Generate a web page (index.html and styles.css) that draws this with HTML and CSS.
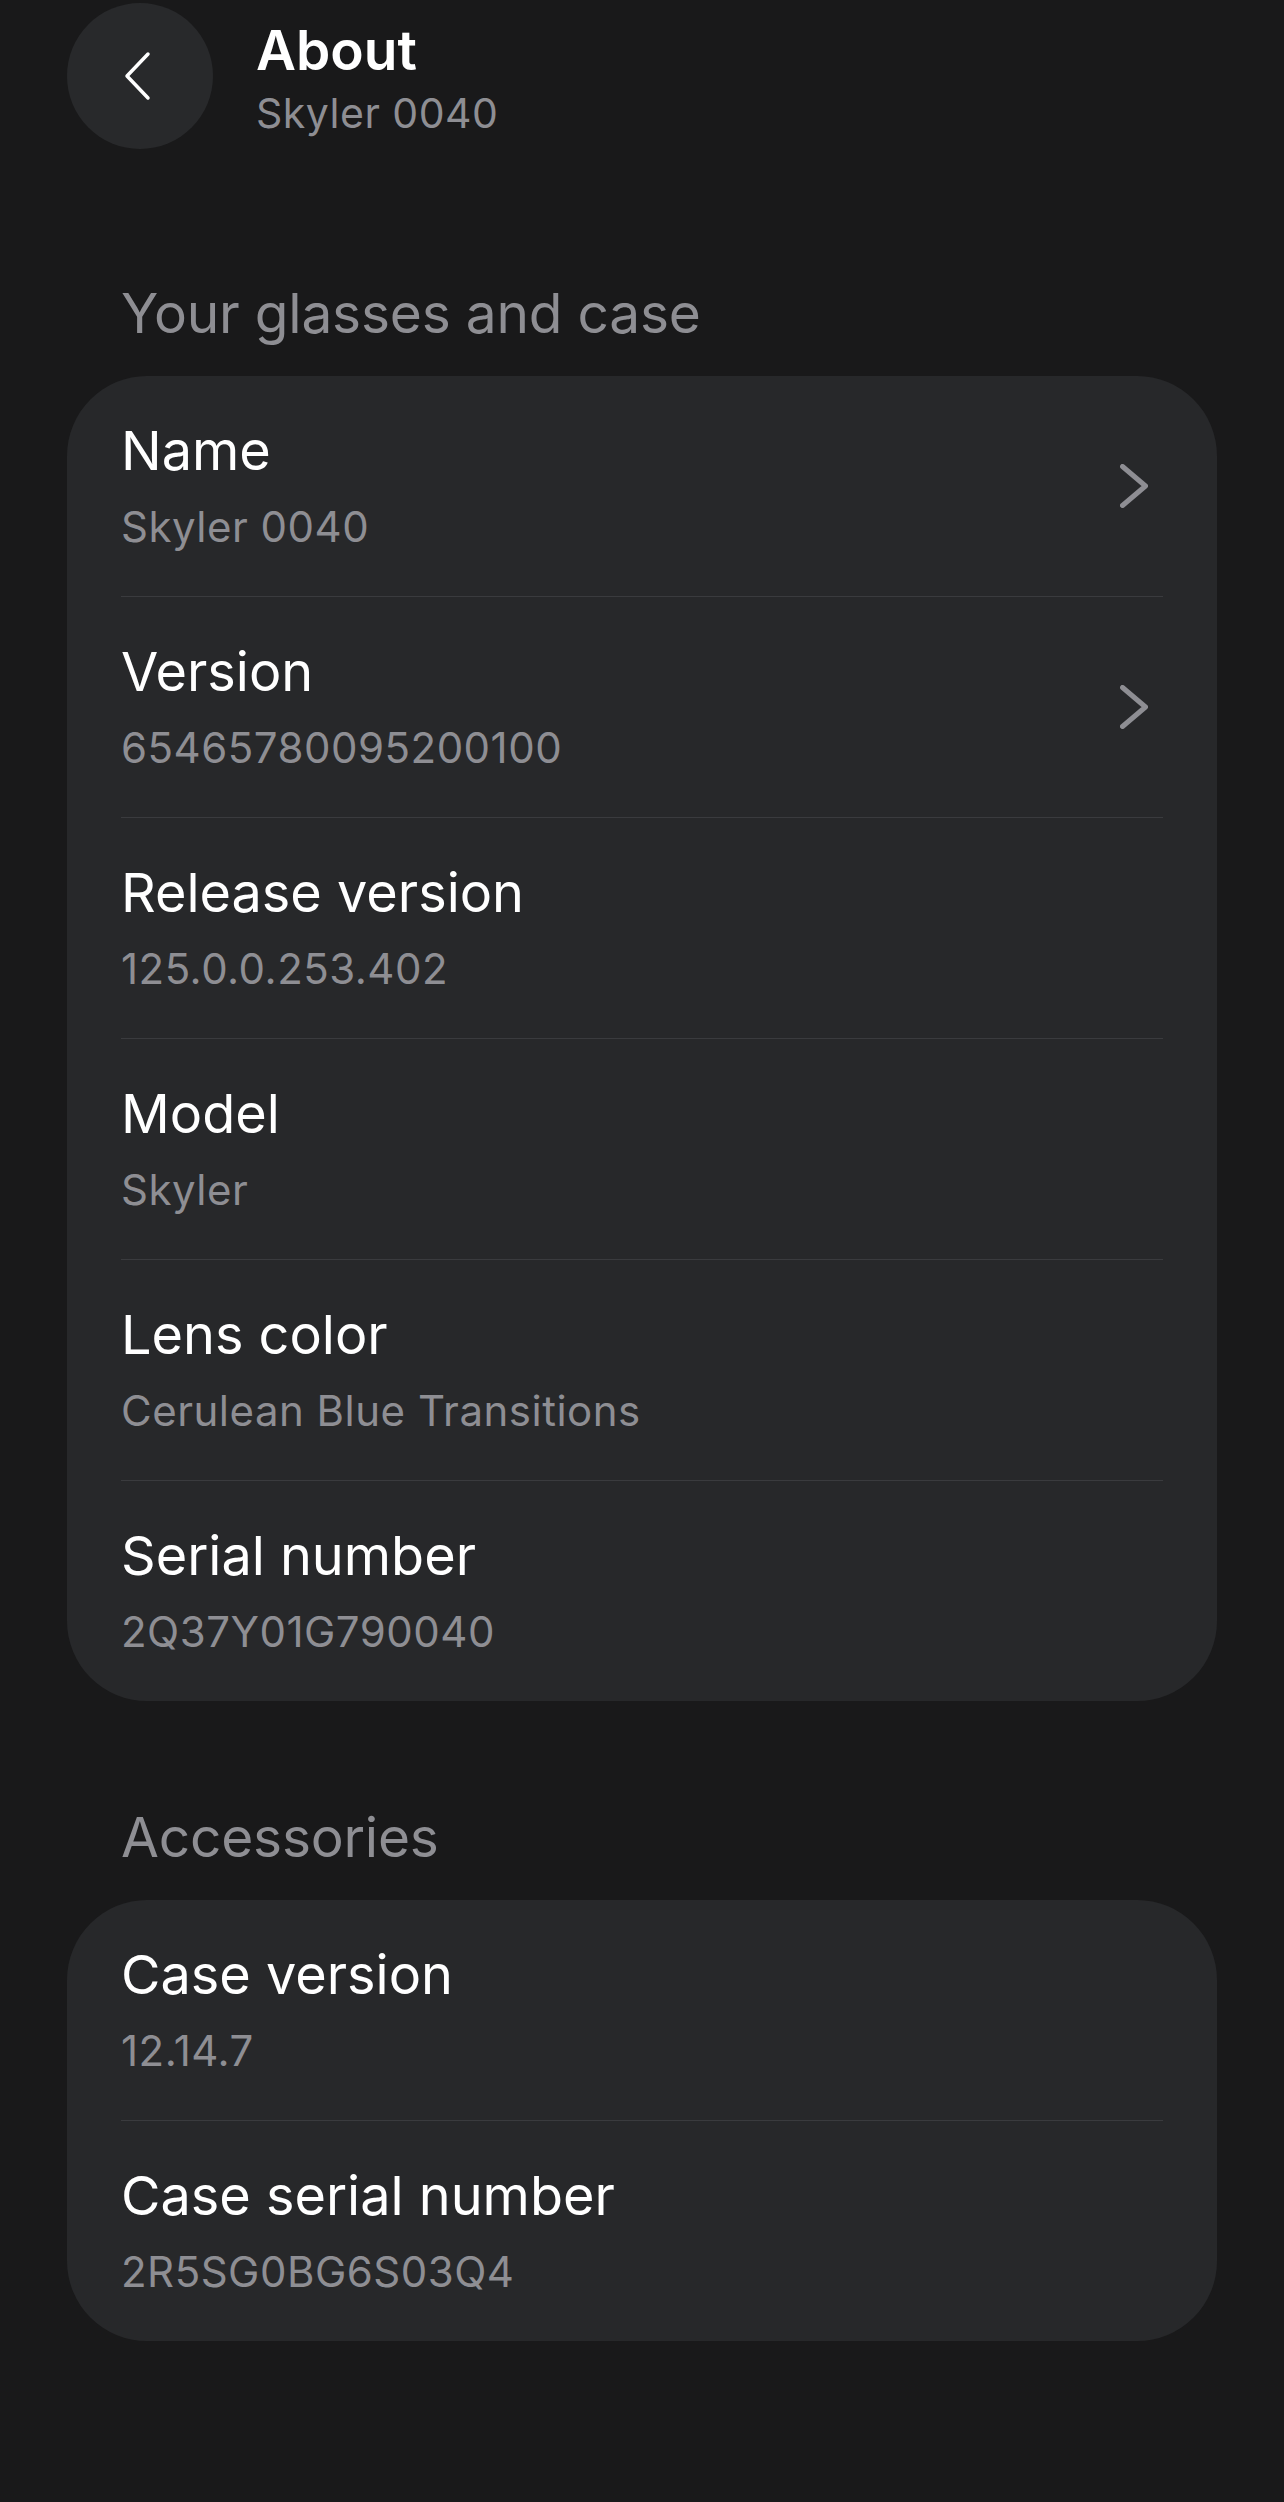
FILE: index.html
```html
<!DOCTYPE html>
<html>
<head>
  <title>About</title>
  <link rel="stylesheet" href="styles.css">
</head>
<body>
  <div class="top-bar">
    <div class="back-btn">
      <svg width="32" height="52" viewBox="0 0 32 52">
        <polyline points="27,4 6,26 27,48" fill="none" stroke="#ffffff" stroke-width="3.5" stroke-linecap="round" stroke-linejoin="round"/>
      </svg>
    </div>
    <div class="page-title">
      <div class="title">About</div>
      <div class="subtitle">Skyler 0040</div>
    </div>
  </div>

  <div class="section-label first">Your glasses and case</div>
  <div class="card">
    <div class="row">
      <div class="row-text">
        <div class="row-title">Name</div>
        <div class="row-value">Skyler 0040</div>
      </div>
      <svg class="chevron" width="28" height="44" viewBox="0 0 28 44">
        <polyline points="2.5,2.5 25.5,22 2.5,41.5" fill="none" stroke="#8e8e93" stroke-width="5" stroke-linecap="round" stroke-linejoin="round"/>
      </svg>
    </div>
    <div class="row">
      <div class="row-text">
        <div class="row-title">Version</div>
        <div class="row-value">65465780095200100</div>
      </div>
      <svg class="chevron" width="28" height="44" viewBox="0 0 28 44">
        <polyline points="2.5,2.5 25.5,22 2.5,41.5" fill="none" stroke="#8e8e93" stroke-width="5" stroke-linecap="round" stroke-linejoin="round"/>
      </svg>
    </div>
    <div class="row">
      <div class="row-text">
        <div class="row-title">Release version</div>
        <div class="row-value">125.0.0.253.402</div>
      </div>
    </div>
    <div class="row">
      <div class="row-text">
        <div class="row-title">Model</div>
        <div class="row-value">Skyler</div>
      </div>
    </div>
    <div class="row">
      <div class="row-text">
        <div class="row-title">Lens color</div>
        <div class="row-value">Cerulean Blue Transitions</div>
      </div>
    </div>
    <div class="row">
      <div class="row-text">
        <div class="row-title">Serial number</div>
        <div class="row-value">2Q37Y01G790040</div>
      </div>
    </div>
  </div>

  <div class="section-label">Accessories</div>
  <div class="card">
    <div class="row">
      <div class="row-text">
        <div class="row-title">Case version</div>
        <div class="row-value">12.14.7</div>
      </div>
    </div>
    <div class="row">
      <div class="row-text">
        <div class="row-title">Case serial number</div>
        <div class="row-value">2R5SG0BG6S03Q4</div>
      </div>
    </div>
  </div>
</body>
</html>
```

FILE: styles.css
```css
body {
  margin: 0;
  background-color: #19191a;
  font-family: Inter, "Noto Sans", sans-serif;
  color: #ffffff;
  min-height: 2502px;
}
.top-bar {
  display: flex;
  align-items: flex-start;
  padding: 3px 0 0 67px;
}
.back-btn {
  width: 146px;
  height: 146px;
  border-radius: 50%;
  background-color: #28292b;
  display: flex;
  justify-content: center;
  align-items: center;
}
.back-btn svg {
  margin-left: -6px;
}
.page-title {
  margin-left: 43px;
  padding-top: 15px;
}
.title {
  font-size: 55px;
  line-height: 64px;
  font-weight: 600;
}
.subtitle {
  font-size: 41px;
  line-height: 48px;
  letter-spacing: 0.5px;
  color: #8e8e93;
  margin-top: 7px;
}
.section-label {
  font-size: 55px;
  line-height: 64px;
  letter-spacing: -0.2px;
  color: #8e8e93;
  padding-left: 121px;
  margin: 104px 0 31px;
}
.section-label.first {
  margin-top: 132px;
}
.card {
  background-color: #27282a;
  margin: 0 67px;
  padding: 0 54px;
  border-radius: 80px;
}
.row {
  display: flex;
  align-items: center;
  height: 220px;
  border-bottom: 1px solid #3a3b3e;
}
.row:last-child {
  border-bottom: none;
}
.row-text {
  flex: 1;
}
.row-title {
  font-size: 54px;
  line-height: 64px;
}
.row-value {
  font-size: 42px;
  line-height: 52px;
  letter-spacing: 0.5px;
  color: #8e8e93;
  margin-top: 18px;
}
.chevron {
  margin-right: 15px;
}
```
